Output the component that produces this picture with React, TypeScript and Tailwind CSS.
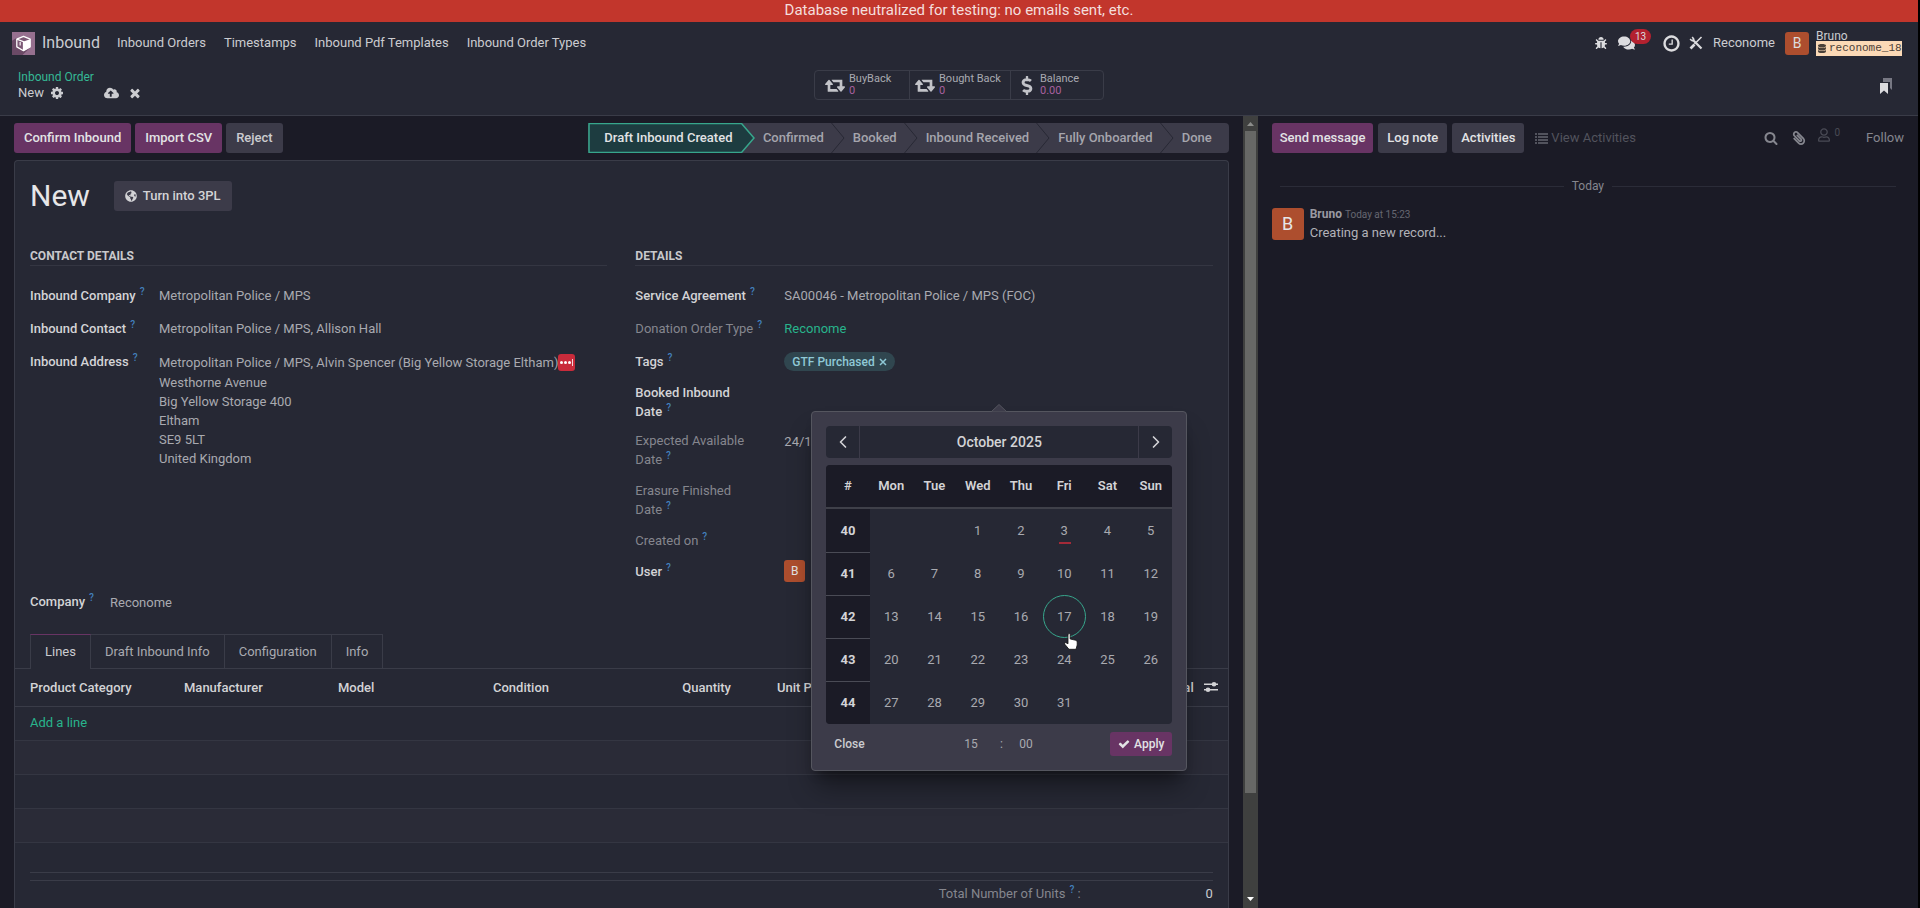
import type { ReactNode } from 'react';
import { ChevronLeft, ChevronRight } from 'lucide-react';
import {
  FaBug,
  FaCloudUploadAlt,
  FaComments,
  FaDatabase,
  FaDollarSign,
  FaGlobeAmericas,
  FaPaperclip,
  FaRegUser,
} from 'react-icons/fa';

const menus = ['Inbound Orders', 'Timestamps', 'Inbound Pdf Templates', 'Inbound Order Types'];

const stages = ['Confirmed', 'Booked', 'Inbound Received', 'Fully Onboarded', 'Done'];

const tabs = ['Lines', 'Draft Inbound Info', 'Configuration', 'Info'];

const addressLines = ['Westhorne Avenue', 'Big Yellow Storage 400', 'Eltham', 'SE9 5LT', 'United Kingdom'];

const weekDays = ['Mon', 'Tue', 'Wed', 'Thu', 'Fri', 'Sat', 'Sun'];

const weeks = [
  { id: 40, days: [0, 0, 1, 2, 3, 4, 5] },
  { id: 41, days: [6, 7, 8, 9, 10, 11, 12] },
  { id: 42, days: [13, 14, 15, 16, 17, 18, 19] },
  { id: 43, days: [20, 21, 22, 23, 24, 25, 26] },
  { id: 44, days: [27, 28, 29, 30, 31, 0, 0] },
];

const glyphs = {
  times:
    'M1490 1322q0 40-28 68l-136 136q-28 28-68 28t-68-28l-294-294-294 294q-28 28-68 28t-68-28l-136-136q-28-28-28-68t28-68l294-294-294-294q-28-28-28-68t28-68l136-136q28-28 68-28t68 28l294 294 294-294q28-28 68-28t68 28l136 136q28 28 28 68t-28 68l-294 294 294 294q28 28 28 68z',
  check:
    'M1671 566q0 40-28 68l-724 724-136 136q-28 28-68 28t-68-28l-136-136-362-362q-28-28-28-68t28-68l136-136q28-28 68-28t68 28l294 295 656-657q28-28 68-28t68 28l136 136q28 28 28 68z',
  search:
    'M1216 832q0-185-131.5-316.5t-316.5-131.5-316.5 131.5-131.5 316.5 131.5 316.5 316.5 131.5 316.5-131.5 131.5-316.5zm512 832q0 52-38 90t-90 38q-54 0-90-38l-343-342q-179 124-399 124-143 0-273.5-55.5t-225-150-150-225-55.5-273.5 55.5-273.5 150-225 225-150 273.5-55.5 273.5 55.5 225 150 150 225 55.5 273.5q0 220-124 399l343 343q37 37 37 90z',
  clock:
    'M1024 544v448q0 14-9 23t-23 9h-320q-14 0-23-9t-9-23v-64q0-14 9-23t23-9h224v-352q0-14 9-23t23-9h64q14 0 23 9t9 23zm416 352q0-148-73-273t-198-198-273-73-273 73-198 198-73 273 73 273 198 198 273 73 273-73 198-198 73-273zm224 0q0 209-103 385.5t-279.5 279.5-385.5 103-385.5-103-279.5-279.5-103-385.5 103-385.5 279.5-279.5 385.5-103 385.5 103 279.5 279.5 103 385.5z',
  cog:
    'M1152 896q0-106-75-181t-181-75-181 75-75 181 75 181 181 75 181-75 75-181zm512-109v222q0 12-8 23t-20 13l-185 28q-19 54-39 91 35 50 107 138 10 12 10 25t-9 23q-27 37-99 108t-94 71q-12 0-26-9l-138-108q-44 23-91 38-16 136-29 186-7 28-36 28h-222q-14 0-24.5-8.5t-11.5-21.5l-28-184q-49-16-90-37l-141 107q-10 9-25 9-14 0-25-11-126-114-165-168-7-10-7-23 0-12 8-23 15-21 51-66.5t54-70.5q-27-50-41-99l-183-27q-13-2-21-12.5t-8-23.5v-222q0-12 8-23t19-13l186-28q14-46 39-92-40-57-107-138-10-12-10-24 0-10 9-23 26-36 98.5-107.5t94.5-71.5q13 0 26 10l138 107q44-23 91-38 16-136 29-186 7-28 36-28h222q14 0 24.5 8.5t11.5 21.5l28 184q49 16 90 37l142-107q9-9 24-9 13 0 25 10 129 119 165 170 7 8 7 22 0 12-8 23-15 21-51 66.5t-54 70.5q26 50 41 98l183 28q13 2 21 12.5t8 23.5z',
};

function Glyph({ name, className }: { name: keyof typeof glyphs; className: string }) {
  return (
    <svg viewBox="0 0 1792 1792" fill="currentColor" className={className} aria-hidden="true">
      <path d={glyphs[name]} />
    </svg>
  );
}

function Retweet() {
  return (
    <svg viewBox="0 0 1920 1792" fill="currentColor" className="h-5 w-5" aria-hidden="true">
      <path d="M1280 1504q0 13-9.5 22.5t-22.5 9.5h-960q-8 0-13.5-2t-9-7-5.5-8-3-11.5-1-11.5v-600h-192q-26 0-45-19t-19-45q0-24 15-41l320-384q19-22 49-22t49 22l320 384q15 17 15 41 0 26-19 45t-45 19h-192v384h576q16 0 25 11l160 192q7 10 7 21zm640-416q0 24-15 41l-320 384q-20 23-49 23t-49-23l-320-384q-15-17-15-41 0-26 19-45t45-19h192v-384h-576q-16 0-25-12l-160-192q-7-9-7-20 0-13 9.5-22.5t22.5-9.5h960q8 0 13.5 2t9 7 5.5 8 3 11.5 1 11.5v600h192q26 0 45 19t19 45z" />
    </svg>
  );
}

function AppLogo() {
  return (
    <svg viewBox="0 0 24 24" className="h-[23px] w-[23px]" aria-hidden="true">
      <rect width="24" height="24" fill="#96708f" />
      <path d="M0 9 L5 6 V16 L12 20 L20 15.500 L11 24 H0 Z" fill="#6b4a66" />
      <path d="M12 4.500 L19 7.500 V15.500 L12 19.500 L5 15.500 V7.500 Z" fill="#7b5875" stroke="#fff" strokeWidth="1.300" strokeLinejoin="round" />
      <path d="M12 10 L19 7.500 V15.500 L12 19.500 Z" fill="#fff" />
      <path d="M5 7.500 L12 10 V19" fill="none" stroke="#fff" strokeWidth="1.300" />
      <path d="M8.500 10.500 V14" stroke="#fff" strokeWidth="1.200" />
    </svg>
  );
}

function ToolsIcon() {
  return (
    <svg viewBox="0 0 14 14" className="h-[14px] w-[14px]" fill="none" stroke="currentColor" aria-hidden="true">
      <path d="M12.500 1 L5.500 8" strokeWidth="1.600" />
      <path d="M5.500 8.500 L1.500 12.500" strokeWidth="2.600" />
      <path d="M4 4 L12.500 12.500" strokeWidth="2.200" />
      <path d="M1 3.200 L3.200 4.800 L4.800 3.200 L3.200 1" strokeWidth="1.500" />
    </svg>
  );
}

function Help() {
  return <sup className="ml-1 text-[10px] leading-none font-medium text-[#4380bd]">?</sup>;
}

type FieldProps = {
  id?: string;
  label: string;
  muted?: boolean;
  row?: string;
  children?: ReactNode;
};

function Field({ id, label, muted, row = 'h-[33px] items-center', children }: FieldProps) {
  return (
    <div className={`flex ${row}`}>
      <label
        htmlFor={id}
        className={`w-[129px] shrink-0 leading-[19px] ${muted ? 'text-[#85868e]' : 'font-medium text-[#d3d3d6]'}`}
      >
        {label}
        <Help />
      </label>
      {children}
    </div>
  );
}

function TextValue({ id, value }: { id: string; value: string }) {
  return <input id={id} defaultValue={value} className="field-sizing-content h-5 bg-transparent outline-none" />;
}

function NavBar() {
  return (
    <nav className="flex h-[42px] items-center pr-4 pl-3 text-[#cbccd0]">
      <a href="#home" className="flex items-center gap-[7px] text-base">
        <AppLogo />
        Inbound
      </a>
      <div className="ml-2 flex">
        {menus.map((menu) => (
          <a key={menu} href="#menu" className="px-[9px]">
            {menu}
          </a>
        ))}
      </div>
      <div className="ml-auto flex items-center text-[#dcdcdf]">
        <button aria-label="Debug">
          <FaBug className="h-3 w-3" />
        </button>
        <button aria-label="Messages" className="relative ml-[11px]">
          <FaComments className="h-4 w-[17px]" />
          <span className="absolute -top-[6px] left-3 rounded-full bg-[#b3212f] px-[5px] text-[10px] leading-[15px]">13</span>
        </button>
        <button aria-label="Activities" className="ml-[27px]">
          <Glyph name="clock" className="h-[19px] w-[19px]" />
        </button>
        <button aria-label="Tools" className="ml-2">
          <ToolsIcon />
        </button>
        <button className="ml-[10px] text-[#cbccd0]">Reconome</button>
        <button className="ml-[10px] flex items-center gap-[7px] text-left">
          <span className="grid h-[23px] w-6 place-items-center rounded-[3px] bg-[#ad4e2e] text-sm">B</span>
          <span className="block w-[86px]">
            <span className="block text-xs leading-[10px] text-[#cbccd0]">Bruno</span>
            <span className="flex h-[15px] items-center gap-[3px] bg-[#fbd9b6] px-[2px] font-['Liberation_Mono',monospace] text-[11px] text-[#4a4038]">
              <FaDatabase className="h-[9px] w-2 shrink-0" />
              reconome_18
            </span>
          </span>
        </button>
      </div>
    </nav>
  );
}

function StatButton({ icon, label, value, width }: { icon: ReactNode; label: string; value: string; width: string }) {
  return (
    <button className={`flex items-center gap-1 border-r border-[#3a3c48] text-left last:border-r-0 ${width}`}>
      {icon}
      <span className="text-[11px] leading-3 text-[#a9aab1]">
        {label}
        <span className="block text-[#a9609f]">{value}</span>
      </span>
    </button>
  );
}

function ControlPanel() {
  return (
    <div className="grid h-[52px] grid-cols-[1fr_auto_1fr] items-start border-b border-[#3a3c48] px-[18px]">
      <div className="pt-[5px] leading-4">
        <a href="#orders" className="block text-xs text-[#35b995]">
          Inbound Order
        </a>
        <div className="flex items-center text-[#cbccd0]">
          <span>New</span>
          <button aria-label="Actions" className="ml-[6px]">
            <Glyph name="cog" className="h-[14px] w-[14px]" />
          </button>
          <button aria-label="Save" className="ml-10">
            <FaCloudUploadAlt className="h-[14px] w-[15px]" />
          </button>
          <button aria-label="Discard" className="ml-[9px]">
            <Glyph name="times" className="h-[14px] w-[14px]" />
          </button>
        </div>
      </div>
      <div className="mt-[6px] flex h-[30px] rounded border border-[#3a3c48] text-[#c2c3c8]">
        <StatButton icon={<Retweet />} label="BuyBack" value="0" width="w-[95px] pl-[10px]" />
        <StatButton icon={<Retweet />} label="Bought Back" value="0" width="w-[101px] pl-[5px]" />
        <StatButton
          icon={<FaDollarSign className="mr-[3px] h-[19px] w-3" />}
          label="Balance"
          value="0.00"
          width="w-[92px] pl-[10px]"
        />
      </div>
      <button aria-label="Bookmarks" className="mt-[14px] mr-2 justify-self-end">
        <svg viewBox="0 0 12 16" className="h-4 w-3" aria-hidden="true">
          <path d="M3 0 H12 V12 L10 10 V4 H3 Z" fill="#777883" />
          <path d="M0 5 H8 V16 L4 12.500 L0 16 Z" fill="#dcdcdf" />
        </svg>
      </button>
    </div>
  );
}

function StatusBar() {
  return (
    <div className="flex h-[30px] rounded-sm bg-[#3c3b49] font-medium text-[#a5a5ad]">
      <button className="relative isolate w-[167px] pr-[6px] text-[#e2e3e5]">
        <svg viewBox="0 0 167 30" className="absolute inset-0 -z-10 h-full w-full" aria-hidden="true">
          <path d="M1 0.500 H153.500 L166 15 L153.500 29.500 H1 Z" fill="#1d3c40" stroke="#37a68c" strokeWidth="1.500" />
        </svg>
        Draft Inbound Created
      </button>
      {stages.map((stage) => (
        <button key={stage} className="group relative pr-[21px] pl-2 last:pr-[17px]">
          {stage}
          <svg
            viewBox="0 0 14 30"
            className="absolute top-0 right-0 h-[30px] w-[14px] group-last:hidden"
            fill="none"
            stroke="#272834"
            aria-hidden="true"
          >
            <path d="M0.500 0 L13 15 L0.500 30" />
          </svg>
        </button>
      ))}
    </div>
  );
}

function DatePicker() {
  return (
    <div className="absolute top-[19px] left-[27px] z-10 w-[376px] rounded border border-[#55565f] bg-[#3c3b49] px-[14px] py-[14px] shadow-xl shadow-black/40">
      <svg viewBox="0 0 16 8" className="absolute -top-2 left-[179px] h-2 w-4" aria-hidden="true">
        <path d="M0 8 L8 0.500 L16 8 Z" fill="#3c3b49" stroke="#55565f" />
      </svg>
      <div className="flex h-8 rounded bg-[#262834] font-medium text-[#d3d3d6]">
        <button aria-label="Previous" className="grid w-[34px] place-items-center border-r border-[#3c3b49]">
          <ChevronLeft size={20} />
        </button>
        <button className="flex-1 text-sm">October 2025</button>
        <button aria-label="Next" className="grid w-[34px] place-items-center border-l border-[#3c3b49]">
          <ChevronRight size={20} />
        </button>
      </div>
      <table className="mt-[7px] w-full table-fixed overflow-hidden rounded bg-[#262834] text-center">
        <thead>
          <tr className="h-[43px] border-b-2 border-[#3f4049] bg-[#1b1b26] text-[#d3d3d6]">
            <th className="font-semibold">#</th>
            {weekDays.map((day) => (
              <th key={day} className="font-semibold">
                {day}
              </th>
            ))}
          </tr>
        </thead>
        <tbody>
          {weeks.map((week) => (
            <tr key={week.id} className="group h-[43px]">
              <th className="border-b border-[#4a4b55] bg-[#1b1b26] font-bold text-[#d3d3d6] group-last:border-b-0">{week.id}</th>
              {week.days.map((day, idx) => (
                <td key={idx} className="p-0">
                  {day > 0 && (
                    <button
                      className={`relative block h-[43px] w-full ${day === 17 ? 'rounded-full border border-[#37a68c]' : ''}`}
                    >
                      {day}
                      {day === 3 && <span className="absolute bottom-2 left-4 h-[2px] w-3 bg-[#a32a38]" />}
                    </button>
                  )}
                </td>
              ))}
            </tr>
          ))}
        </tbody>
      </table>
      <div className="mt-2 flex h-6 items-center text-xs text-[#a9aab0]">
        <button className="w-[131px] pl-2 text-left font-medium text-[#cbccd0]">Close</button>
        <select aria-label="Hours" className="w-9 appearance-none pl-[7px]">
          <option>15</option>
        </select>
        <span className="w-4 text-center">:</span>
        <select aria-label="Minutes" className="w-9 appearance-none pl-[10px]">
          <option>00</option>
        </select>
        <button className="ml-auto flex h-6 items-center gap-1 rounded-[3px] bg-[#683464] px-2 font-medium text-[#e2e3e5]">
          <Glyph name="check" className="h-3 w-3" />
          Apply
        </button>
      </div>
      {/* pointer resting on the 17th */}
      <svg viewBox="0 0 14 17" className="absolute top-[221px] left-[252px] h-[17px] w-[14px]" aria-hidden="true">
        <path
          d="M4 1 Q5.500 0 6.200 1.500 V6 L12 7.300 Q13.300 7.800 13.200 9 V12 L12 16.300 H5 L1 11.500 Q0 9.800 1.500 9.500 L4 10.800 Z"
          fill="#fff"
          stroke="#111"
          strokeWidth="0.800"
        />
      </svg>
    </div>
  );
}

function GroupTitle({ children }: { children: ReactNode }) {
  return (
    <h2 className="mb-[13px] border-b border-[#343642] text-xs leading-[18px] font-bold text-[#c9c9cc] uppercase">{children}</h2>
  );
}

function ContactDetails() {
  return (
    <div>
      <GroupTitle>Contact details</GroupTitle>
      <Field id="company" label="Inbound Company">
        <TextValue id="company" value="Metropolitan Police / MPS" />
      </Field>
      <Field id="contact" label="Inbound Contact">
        <TextValue id="contact" value="Metropolitan Police / MPS, Allison Hall" />
      </Field>
      <Field id="address" label="Inbound Address" row="items-start pt-[7px]">
        <div className="leading-[19px]">
          <div className="mb-px flex h-5 items-center">
            <TextValue id="address" value="Metropolitan Police / MPS, Alvin Spencer (Big Yellow Storage Eltham)" />
            <button
              aria-label="More"
              className="flex h-[17px] w-[17px] items-center justify-center gap-px rounded-[3px] bg-[#c92b3b]"
            >
              <span className="h-[3px] w-[3px] rounded-full bg-white" />
              <span className="h-[3px] w-[3px] rounded-full bg-white" />
              <span className="h-[3px] w-[3px] rounded-full bg-white" />
              <span className="h-[7px] w-px bg-white/80" />
            </button>
          </div>
          {addressLines.map((line) => (
            <p key={line}>{line}</p>
          ))}
        </div>
      </Field>
    </div>
  );
}

function Details() {
  return (
    <div className="[&_label]:w-[149px]">
      <GroupTitle>Details</GroupTitle>
      <Field id="agreement" label="Service Agreement">
        <TextValue id="agreement" value="SA00046 - Metropolitan Police / MPS (FOC)" />
      </Field>
      <Field label="Donation Order Type" muted>
        <a href="#type" className="text-[#28b48c]">
          Reconome
        </a>
      </Field>
      <Field label="Tags">
        <span className="flex h-[19px] items-center gap-1 rounded-full bg-[#30464f] px-2 text-xs font-medium text-[#8fc9d6]">
          GTF Purchased
          <button aria-label="Remove tag">
            <svg viewBox="0 0 8 8" className="h-2 w-2" stroke="currentColor" strokeWidth="1.500" aria-hidden="true">
              <path d="M1 1 L7 7 M7 1 L1 7" />
            </svg>
          </button>
        </span>
      </Field>
      <Field id="booked" label="Booked Inbound Date" row="h-12 items-center [&>label]:pr-9">
        <div className="relative h-5 flex-1">
          <input id="booked" className="h-5 w-full bg-transparent outline-none" />
          <DatePicker />
        </div>
      </Field>
      <Field id="expected" label="Expected Available Date" muted row="h-[49px] items-start pt-[5px] [&>label]:pr-9">
        <TextValue id="expected" value="24/10/2025 15:00:00" />
      </Field>
      <Field label="Erasure Finished Date" muted row="h-[50px] items-center [&>label]:pr-9" />
      <Field label="Created on" muted row="h-[30px] items-center" />
      <Field label="User" row="h-8 items-center">
        <span className="grid h-[22px] w-[21px] place-items-center rounded-[3px] bg-[#ad4e2e] text-xs text-[#e2e3e5]">B</span>
      </Field>
    </div>
  );
}

function OrderLines() {
  return (
    <table className="w-full table-fixed text-left">
      <thead>
        <tr className="h-[37px] border-b border-[#3a3c48] text-[#d3d3d6] [&>th]:font-medium">
          <th className="w-[169px] pl-[15px]">Product Category</th>
          <th className="w-[154px]">Manufacturer</th>
          <th className="w-[155px]">Model</th>
          <th className="w-[154px]">Condition</th>
          <th className="w-[84px] text-right">Quantity</th>
          <th className="w-[180px] pl-[46px]">Unit Price</th>
          <th className="text-right">Total</th>
          <th className="w-[34px] pl-[10px]">
            <button aria-label="Optional columns" className="block">
              <svg viewBox="0 0 14 12" className="h-3 w-[14px]" fill="currentColor" aria-hidden="true">
                <path d="M0 2.500 H14 V4 H0 Z M0 8 H14 V9.500 H0 Z" />
                <circle cx="10" cy="3.200" r="2.300" />
                <circle cx="4" cy="8.800" r="2.300" />
              </svg>
            </button>
          </th>
        </tr>
      </thead>
      <tbody className="[&>tr]:h-[34px] [&>tr]:border-b [&>tr]:border-[#343642]">
        <tr>
          <td colSpan={8} className="pl-[15px]">
            <a href="#add" className="text-[#28b48c]">
              Add a line
            </a>
          </td>
        </tr>
        <tr className="bg-[#2a2b37]">
          <td colSpan={8} />
        </tr>
        <tr>
          <td colSpan={8} />
        </tr>
        <tr className="bg-[#2a2b37]">
          <td colSpan={8} />
        </tr>
      </tbody>
    </table>
  );
}

function FormSheet() {
  return (
    <section className="mt-[7px] flex-1 rounded-t border border-b-0 border-[#3a3c48] bg-[#262834]">
      <div className="px-[15px] pt-5">
        <div className="flex items-center gap-6">
          <h1 className="text-3xl leading-[30px] text-[#e6e6e8]">New</h1>
          <button className="flex h-[30px] items-center gap-[6px] rounded-[3px] bg-[#3c3b49] px-[11px] font-medium text-[#d3d3d6]">
            <FaGlobeAmericas className="h-3 w-3" />
            Turn into 3PL
          </button>
        </div>
        <div className="mt-9 grid grid-cols-2 gap-7">
          <ContactDetails />
          <Details />
        </div>
        <div className="flex h-[30px] items-center">
          <label htmlFor="owner" className="mr-4 font-medium text-[#d3d3d6]">
            Company
            <Help />
          </label>
          <TextValue id="owner" value="Reconome" />
        </div>
      </div>
      <div className="mt-[17px] flex h-[35px] border-b border-[#3a3c48] pl-[15px]" role="tablist">
        {tabs.map((tab, idx) => (
          <button
            key={tab}
            role="tab"
            aria-selected={idx === 0}
            className={`h-[35px] border-t border-r px-[14px] ${
              idx === 0
                ? 'border-l border-x-[#3a3c48] border-t-[#683464] bg-[#262834] text-[#cbccd0]'
                : 'border-[#3a3c48]'
            }`}
          >
            {tab}
          </button>
        ))}
      </div>
      <OrderLines />
      <div className="mx-[15px] mt-[29px] h-2 border-t border-[#3a3c48]" />
      <div className="mx-[15px] flex h-7 items-center justify-end border-t border-[#3a3c48]">
        <span className="text-[#85868e]">
          Total Number of Units
          <Help /> :
        </span>
        <span className="w-[132px] text-right text-[#cbccd0]">0</span>
      </div>
    </section>
  );
}

function FormView() {
  return (
    <main className="flex min-w-0 flex-1 flex-col overflow-hidden px-[14px] pt-[7px]">
      <div className="flex shrink-0 items-center justify-between">
        <div className="flex gap-1 font-medium text-[#e2e3e5] [&>button]:h-[30px] [&>button]:rounded-[3px] [&>button]:px-[10px]">
          <button className="bg-[#683464]">Confirm Inbound</button>
          <button className="bg-[#683464]">Import CSV</button>
          <button className="bg-[#3c3b49] text-[#cbccd0]">Reject</button>
        </div>
        <StatusBar />
      </div>
      <FormSheet />
    </main>
  );
}

function ScrollBar() {
  return (
    <div className="flex w-[15px] shrink-0 flex-col items-center bg-[#3f403f] pb-[3px]" aria-hidden="true">
      <svg viewBox="0 0 15 15" className="h-[15px] w-[15px] shrink-0">
        <path d="M4 10 L7.500 6 L11 10 Z" fill="#8c8d8b" />
      </svg>
      <div className="h-[662px] w-[11px] bg-[#676866]" />
      <svg viewBox="0 0 15 12" className="mt-auto h-3 w-[15px] shrink-0">
        <path d="M4 4 L11 4 L7.500 8 Z" fill="#fff" />
      </svg>
    </div>
  );
}

function Chatter() {
  return (
    <aside className="min-w-0 px-[14px] pt-[7px]">
      <div className="flex h-[30px] items-center gap-[5px] font-medium text-[#e2e3e5]">
        <button className="h-full rounded-[3px] bg-[#683464] px-2">Send message</button>
        <button className="h-full rounded-[3px] bg-[#3c3b49] px-[9px]">Log note</button>
        <button className="h-full rounded-[3px] bg-[#3c3b49] px-[9px]">Activities</button>
        <button className="ml-[6px] flex items-center gap-[3px] font-normal text-[#52535d]">
          <svg viewBox="0 0 13 11" className="h-[11px] w-[13px]" fill="currentColor" aria-hidden="true">
            <path d="M0 0 H2 V2 H0 Z M3 0 H13 V2 H3 Z M0 3 H2 V5 H0 Z M3 3 H13 V5 H3 Z M0 6 H2 V8 H0 Z M3 6 H13 V8 H3 Z M0 9 H2 V11 H0 Z M3 9 H13 V11 H3 Z" />
          </svg>
          View Activities
        </button>
        <div className="ml-auto flex items-center font-normal text-[#85868e]">
          <button aria-label="Search messages">
            <Glyph name="search" className="h-[14px] w-[14px]" />
          </button>
          <button aria-label="Attachments" className="ml-[14px]">
            <FaPaperclip className="h-[14px] w-[14px] -scale-x-100" />
          </button>
          <button aria-label="Followers" className="ml-3 flex text-[#4a4b55]">
            <FaRegUser className="h-[14px] w-3" />
            <span className="ml-1 h-5 text-[10px] leading-none">0</span>
          </button>
          <button className="ml-[26px]">Follow</button>
        </div>
      </div>
      <div className="mx-2 mt-6 flex items-center gap-2 text-xs leading-[18px] text-[#85868e]">
        <hr className="flex-1 border-[#2b2c38]" />
        Today
        <hr className="flex-1 border-[#2b2c38]" />
      </div>
      <div className="mt-[9px] flex gap-[6px]">
        <span className="mt-1 grid h-8 w-8 place-items-center rounded-[3px] bg-[#ad4e2e] text-lg text-[#e6e6e8]">B</span>
        <div className="leading-4 text-[#b2b2b8]">
          <p className="text-xs leading-5 font-bold text-[#9a9aa2]">
            Bruno <span className="text-[10px] font-normal text-[#666771]">Today at 15:23</span>
          </p>
          <p>Creating a new record...</p>
        </div>
      </div>
    </aside>
  );
}

export default function App() {
  return (
    <div className="flex h-screen flex-col overflow-hidden border-r-2 border-black bg-[#1b1b26] font-['Roboto','Noto_Sans',sans-serif] text-[13px] text-[#a9aab0]">
      <header className="shrink-0 bg-[#262834]">
        <p className="h-[22px] bg-[#c2362c] text-center text-[15px] leading-5 text-[#f4dedc]">
          Database neutralized for testing: no emails sent, etc.
        </p>
        <NavBar />
        <ControlPanel />
      </header>
      <div className="grid min-h-0 flex-1 grid-cols-[40fr_21fr]">
        <div className="flex min-h-0 min-w-0">
          <FormView />
          <ScrollBar />
        </div>
        <Chatter />
      </div>
    </div>
  );
}
